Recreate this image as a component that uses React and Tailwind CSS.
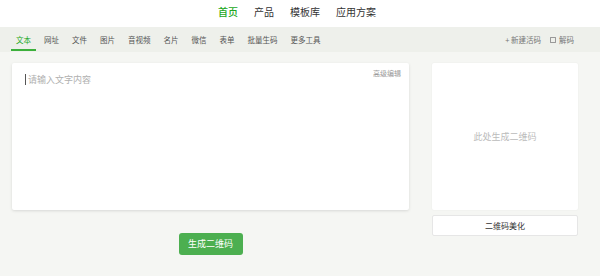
import React from 'react';

const topNav = ['首页', '产品', '模板库', '应用方案'];
const tabs = ['文本', '网址', '文件', '图片', '音视频', '名片', '微信', '表单', '批量生码', '更多工具'];

const App = () => {
  return (
    <div
      className="w-[600px] h-[276px] bg-[#f5f6f3] overflow-hidden"
      style={{ fontFamily: '"Noto Sans CJK SC", "Noto Sans", sans-serif' }}
    >
      {/* top nav */}
      <div className="h-[27px] bg-white flex items-center pl-[218px] gap-[16px] text-[10px] text-[#333] pb-[5px]">
        {topNav.map((item, i) => (
          <span key={item} className={i === 0 ? 'text-[#22a822] font-medium' : ''}>
            {item}
          </span>
        ))}
      </div>

      {/* tab bar */}
      <div className="h-[25px] bg-[#eef0eb] flex items-stretch pl-[11px] pr-[26px] text-[7.5px] text-[#555]">
        <div className="flex items-stretch">
          {tabs.map((t, i) => (
            <div
              key={t}
              className={
                'relative flex items-center px-[5px] mr-[3px] pt-[1px] ' +
                (i === 0 ? 'text-[#22a822]' : '')
              }
            >
              {t}
              {i === 0 && <div className="absolute left-0 right-0 bottom-[1px] h-[2px] bg-[#3cb03c]" />}
            </div>
          ))}
        </div>
        <div className="ml-auto flex items-center gap-[9px] text-[#777] pt-[1px]">
          <span>+ 新建活码</span>
          <span className="flex items-center gap-[3px]">
            <span className="inline-block w-[6px] h-[6px] border border-dashed border-[#999] rounded-[1px]" />
            解码
          </span>
        </div>
      </div>

      {/* main */}
      <div className="flex pt-[11px] pl-[12px] gap-[23px]">
        <div className="flex flex-col items-center">
          <div className="relative w-[397px] h-[147px] bg-white shadow-[0_1px_3px_rgba(0,0,0,0.12)] rounded-[2px]">
            <div className="absolute top-[10px] left-[13px] flex items-center">
              <span className="w-[1px] h-[11px] bg-[#555] mr-[2px]" />
              <span className="text-[9px] text-[#b0b0b0]">请输入文字内容</span>
            </div>
            <span className="absolute top-[5px] right-[8px] text-[7px] text-[#999]">高级编辑</span>
          </div>
          <button className="mt-[23px] w-[64px] h-[22px] bg-[#4caf50] text-white text-[9px] rounded-[3px]">
            生成二维码
          </button>
        </div>

        <div className="flex flex-col gap-[5px]">
          <div className="w-[146px] h-[147px] bg-white rounded-[2px] flex items-center justify-center text-[9px] text-[#bbb] shadow-[0_0_2px_rgba(0,0,0,0.06)]">
            此处生成二维码
          </div>
          <button className="w-[146px] h-[21px] bg-white border border-[#e6e6e6] rounded-[2px] text-[8px] text-[#333]">
            二维码美化
          </button>
        </div>
      </div>
    </div>
  );
};

export default App;
